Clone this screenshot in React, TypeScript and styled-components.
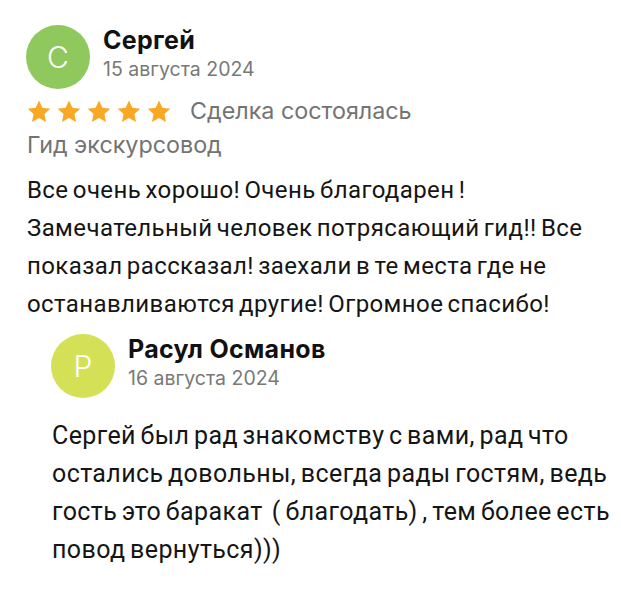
import React from "react";
import styled, { createGlobalStyle } from "styled-components";

const Global = createGlobalStyle`
  html, body { margin: 0; padding: 0; background: #ffffff; }
  body { font-family: Inter, Roboto, "Noto Sans", sans-serif; color: #151515; }
`;

const Page = styled.div`
  width: 621px;
  height: 600px;
  box-sizing: border-box;
  padding: 25px 0 0 27px;
  overflow: hidden;
`;

const Header = styled.div`
  display: flex;
  align-items: center;
  gap: 13px;
  margin-left: -1px;
`;

const Avatar = styled.div<{ $bg: string }>`
  width: 64px;
  height: 64px;
  border-radius: 50%;
  background: ${(p) => p.$bg};
  color: #ffffff;
  display: flex;
  align-items: center;
  justify-content: center;
  font-family: Inter, sans-serif;
  font-size: 30px;
  font-weight: 300;
  flex-shrink: 0;
`;

const Meta = styled.div`
  display: flex;
  flex-direction: column;
  gap: 2px;
  margin-top: -8px;
`;

const Name = styled.div`
  font-family: Inter, sans-serif;
  font-size: 25px;
  font-weight: 700;
  color: #111111;
  line-height: 30px;
  letter-spacing: 0.3px;
`;

const DateText = styled.div`
  font-family: Inter, sans-serif;
  font-size: 19.5px;
  color: #787878;
  line-height: 24px;
`;

const RatingRow = styled.div`
  display: flex;
  align-items: center;
  margin-top: 7px;
  height: 30px;
`;

const Stars = styled.div`
  display: flex;
  gap: 6px;
  margin-right: 19px;
`;

const Muted = styled.div<{ $top?: number }>`
  font-family: Inter, sans-serif;
  font-size: 23.3px;
  color: #737373;
  line-height: 30px;
  margin-top: ${(p) => p.$top ?? 0}px;
`;

const Body = styled.p<{ $top: number; $size: number }>`
  margin: ${(p) => p.$top}px 0 0 0;
  font-family: Roboto, sans-serif;
  font-size: ${(p) => p.$size}px;
  line-height: 38px;
  color: #151515;
  letter-spacing: 0.4px;
  word-spacing: -2px;
`;

const Reply = styled.div`
  margin-top: 11px;
  margin-left: 25px;
`;

const Star = () => (
  <svg width="24" height="23" viewBox="0 0 24 23">
    <path
      d="M12 0.6l3.4 7.2 7.9 0.9-5.9 5.4 1.6 7.8L12 18l-7 3.9 1.6-7.8L0.7 8.7l7.9-0.9z"
      fill="#f8a823"
    />
  </svg>
);

export default function App() {
  return (
    <Page>
      <Global />
      <Header>
        <Avatar $bg="#8fc85c">С</Avatar>
        <Meta>
          <Name>Сергей</Name>
          <DateText>15 августа 2024</DateText>
        </Meta>
      </Header>
      <RatingRow>
        <Stars>
          <Star />
          <Star />
          <Star />
          <Star />
          <Star />
        </Stars>
        <Muted>Сделка состоялась</Muted>
      </RatingRow>
      <Muted $top={4}>Гид экскурсовод</Muted>
      <Body $top={11} $size={24}>
        Все очень хорошо! Очень благодарен !<br />
        Замечательный человек потрясающий гид!! Все<br />
        показал рассказал! заехали в те места где не<br />
        останавливаются другие! Огромное спасибо!
      </Body>
      <Reply>
        <Header>
          <Avatar $bg="#d4e157">Р</Avatar>
          <Meta>
            <Name>Расул Османов</Name>
            <DateText>16 августа 2024</DateText>
          </Meta>
        </Header>
        <Body $top={19} $size={25}>
          Сергей был рад знакомству с вами, рад что<br />
          остались довольны, всегда рады гостям, ведь<br />
          гость это баракат&nbsp; ( благодать) , тем более есть<br />
          повод вернуться)))
        </Body>
      </Reply>
    </Page>
  );
}
